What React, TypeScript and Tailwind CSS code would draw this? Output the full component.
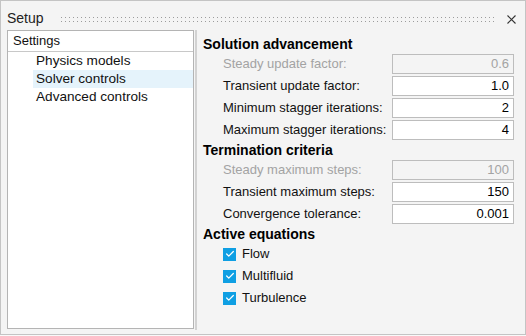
import { Check } from 'lucide-react'

type Field = { label: string; value: string; disabled?: boolean }

const solution: Field[] = [
  { label: 'Steady update factor:', value: '0.6', disabled: true },
  { label: 'Transient update factor:', value: '1.0' },
  { label: 'Minimum stagger iterations:', value: '2' },
  { label: 'Maximum stagger iterations:', value: '4' },
]

const termination: Field[] = [
  { label: 'Steady maximum steps:', value: '100', disabled: true },
  { label: 'Transient maximum steps:', value: '150' },
  { label: 'Convergence tolerance:', value: '0.001' },
]

const equations = ['Flow', 'Multifluid', 'Turbulence']

function SectionTitle({ children }: { children: string }) {
  return <div className="h-[18px] flex items-center text-[14px] font-bold text-black">{children}</div>
}

function FieldRow({ label, value, disabled }: Field) {
  return (
    <div className="h-[22px] flex items-center pl-[20px]">
      <span className={`flex-1 text-[13px] ${disabled ? 'text-[#a3a3a3]' : 'text-[#111]'}`}>{label}</span>
      <div
        className={`w-[122px] h-[20px] border border-[#bdbdbd] flex items-center justify-end pr-[4px] text-[13px] ${
          disabled ? 'bg-[#f4f4f4] text-[#a3a3a3]' : 'bg-white text-black'
        }`}
      >
        {value}
      </div>
    </div>
  )
}

export default function App() {
  return (
    <div className="w-[526px] h-[336px] bg-[#f9f9f9] font-['Liberation_Sans',Arial,sans-serif]">
      <div className="w-[526px] h-[335px] border border-[#c4c4c4] bg-[#f4f4f4] flex flex-col">
        {/* Title bar */}
        <div className="h-[29px] flex items-center pl-[6px] pr-[9px] shrink-0">
          <span className="text-[14px] text-[#222] leading-none pt-[4px]">Setup</span>
          <div className="flex-1 ml-[17px] mr-[12px] h-[6px] mt-[9px]">
            <svg width="100%" height="6">
              <defs>
                <pattern id="grip" width="4" height="4" patternUnits="userSpaceOnUse">
                  <rect x="0" y="0" width="1" height="1" fill="#9c9c9c" />
                </pattern>
              </defs>
              <rect x="0" y="0" width="100%" height="6" fill="url(#grip)" />
            </svg>
          </div>
          <svg width="9" height="9" viewBox="0 0 9 9" className="mt-[7px]">
            <path d="M0.5 0.5 L8.5 8.5 M8.5 0.5 L0.5 8.5" stroke="#333" strokeWidth="1.1" />
          </svg>
        </div>

        {/* Body */}
        <div className="flex-1 flex pl-[6px] pr-[11px] pb-[5px]">
          {/* Tree */}
          <div className="w-[187px] bg-white border border-[#b4b4b4] flex flex-col">
            <div className="h-[21px] border-b border-[#c8c8c8] flex items-center pl-[5px] text-[13px] text-[#111]">
              Settings
            </div>
            <div className="flex flex-col">
              {['Physics models', 'Solver controls', 'Advanced controls'].map((item) => (
                <div
                  key={item}
                  className={`h-[18px] ml-[25px] pl-[3px] flex items-center text-[13.6px] text-[#111] ${
                    item === 'Solver controls' ? 'bg-[#e5f3fb]' : ''
                  }`}
                >
                  {item}
                </div>
              ))}
            </div>
          </div>

          {/* Splitter */}
          <div className="ml-[1px] w-[2px] mb-[-1px] bg-[#d2d2d2]" />

          {/* Properties */}
          <div className="flex-1 pl-[6px] pt-[5px] flex flex-col">
            <SectionTitle>Solution advancement</SectionTitle>
            {solution.map((f) => (
              <FieldRow key={f.label} {...f} />
            ))}
            <SectionTitle>Termination criteria</SectionTitle>
            {termination.map((f) => (
              <FieldRow key={f.label} {...f} />
            ))}
            <SectionTitle>Active equations</SectionTitle>
            {equations.map((eq) => (
              <div key={eq} className="h-[22px] flex items-center pl-[20px] gap-[6px]">
                <div className="w-[13px] h-[13px] bg-[#0f9fe3] flex items-center justify-center">
                  <Check size={10} strokeWidth={3} color="white" />
                </div>
                <span className="text-[13px] text-[#111]">{eq}</span>
              </div>
            ))}
          </div>
        </div>
      </div>
    </div>
  )
}
